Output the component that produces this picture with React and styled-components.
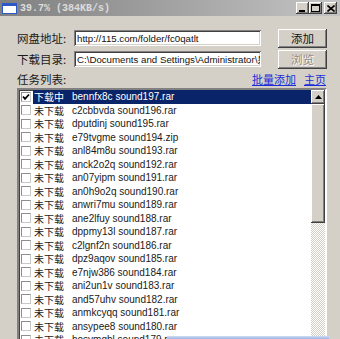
import React from "react";
import styled, { createGlobalStyle } from "styled-components";

const GlobalStyle = createGlobalStyle`
  html, body { margin: 0; padding: 0; background: #d4d0c8; }
  body {
    width: 340px; height: 339px; overflow: hidden;
    font-family: "Liberation Sans", "Noto Sans CJK SC", sans-serif;
  }
`;

const cjk = `"Noto Sans CJK SC", "Liberation Sans", sans-serif`;
const latin = `"Liberation Sans", "Noto Sans CJK SC", sans-serif`;

const raised = `
  background: #d4d0c8;
  box-shadow: inset -1px -1px #404040, inset 1px 1px #ffffff,
    inset -2px -2px #808080, inset 2px 2px #d4d0c8;
`;

const Window = styled.div`
  position: relative;
  width: 340px;
  height: 339px;
  overflow: hidden;
  display: flex;
  flex-direction: column;
  background: #d4d0c8;
`;

const TitleBar = styled.div`
  flex: none;
  height: 16px;
  display: flex;
  align-items: center;
  padding: 0 3px 0 2px;
  background: linear-gradient(to right, #808080, #c4c4c4);
`;

const TitleIcon = styled.div`
  width: 15px;
  height: 11px;
  box-sizing: border-box;
  margin-right: 3px;
  background: #ffffff;
  border: 1px solid #2c58c8;
  border-top-width: 3px;
`;

const TitleText = styled.span`
  font-family: "Liberation Mono", monospace;
  font-weight: bold;
  font-size: 10px;
  color: #dcdcdc;
  white-space: pre;
`;

const CaptionGroup = styled.div`
  margin-left: auto;
  display: flex;
  align-items: center;
`;

const CaptionButton = styled.div`
  width: 13px;
  height: 12px;
  margin-left: ${(p) => p.$gap || 0}px;
  display: flex;
  align-items: center;
  justify-content: center;
  ${raised}
`;

const Body = styled.div`
  flex: 1;
  display: flex;
  flex-direction: column;
  padding: 12px 13px 0 17px;
`;

const FormRow = styled.div`
  height: 20px;
  display: flex;
  align-items: center;
  margin-bottom: 1px;
`;

const Label = styled.span`
  width: 57px;
  font-family: ${cjk};
  font-size: 11.5px;
  color: #1a1a1a;
  white-space: nowrap;
`;

const TextBox = styled.input`
  width: 187px;
  height: 16px;
  box-sizing: border-box;
  margin: 0;
  padding: 0 1px 0 3px;
  border: none;
  outline: none;
  background: #ffffff;
  box-shadow: inset 1px 1px #808080, inset -1px -1px #ffffff,
    inset 2px 2px #404040, inset -2px -2px #d4d0c8;
  font-family: ${latin};
  font-size: 9.7px;
  color: #111;
`;

const Button = styled.button`
  margin: 0 0 0 auto;
  width: 49px;
  height: 19px;
  border: none;
  padding: 0;
  font-family: ${cjk};
  font-size: 11.5px;
  color: ${(p) => (p.disabled ? "#8c8c8c" : "#111")};
  text-shadow: ${(p) => (p.disabled ? "1px 1px #ffffff" : "none")};
  ${raised}
`;

const ListHeader = styled.div`
  height: 18px;
  display: flex;
  align-items: center;
  justify-content: space-between;
`;

const Links = styled.div`
  display: flex;
  gap: 8px;
  margin-right: 1px;
`;

const Link = styled.a`
  font-family: ${cjk};
  font-size: 11px;
  color: #1c2ad8;
  text-decoration: underline;
  cursor: pointer;
`;

const ListBox = styled.div`
  width: 310px;
  height: 264px;
  flex: none;
  box-sizing: border-box;
  display: flex;
  background: #ffffff;
  border-style: solid;
  border-width: 2px;
  border-color: #808080 #ffffff #ffffff #808080;
  box-shadow: inset 1px 1px #404040;
`;

const Rows = styled.div`
  flex: 1;
  overflow: hidden;
  padding-left: 2px;
`;

const Row = styled.div`
  height: 13.5px;
  display: flex;
  align-items: center;
`;

const Check = styled.div`
  width: 10px;
  height: 10px;
  box-sizing: border-box;
  flex: none;
  margin-right: 2px;
  background: #ffffff;
  border: 1px solid #8e8e8e;
  border-right-color: #c8c8c8;
  border-bottom-color: #c8c8c8;
  display: flex;
  align-items: center;
  justify-content: center;
`;

const Item = styled.div`
  flex: 1;
  height: 100%;
  display: flex;
  align-items: center;
  padding-left: 1px;
  background: ${(p) => (p.$selected ? "#0a246a" : "transparent")};
  color: ${(p) => (p.$selected ? "#ffffff" : "#1a1a1a")};
`;

const Status = styled.span`
  width: 38px;
  flex: none;
  font-family: ${cjk};
  font-size: 10px;
  line-height: 13px;
`;

const FileName = styled.span`
  font-family: ${latin};
  font-size: 10px;
  white-space: pre;
  line-height: 13px;
`;

const ScrollBar = styled.div`
  width: 14px;
  flex: none;
  display: flex;
  flex-direction: column;
`;

const ScrollButton = styled.div`
  height: 14px;
  flex: none;
  display: flex;
  align-items: center;
  justify-content: center;
  ${raised}
`;

const Thumb = styled.div`
  height: 119px;
  flex: none;
  ${raised}
`;

const Track = styled.div`
  flex: 1;
  background: conic-gradient(#d4d0c8 25%, #ffffff 0 50%, #d4d0c8 0 75%, #ffffff 0);
  background-size: 2px 2px;
`;

const Overlay = styled.div`
  position: absolute;
  left: 167px;
  bottom: 0;
  width: 162px;
  height: 3px;
  background: linear-gradient(#d0dcf4, #9cb4e4);
`;

const rows = [
  ["bennfx8c", "sound197.rar"],
  ["c2cbbvda", "sound196.rar"],
  ["dputdinj", "sound195.rar"],
  ["e79tvgme", "sound194.zip"],
  ["anl84m8u", "sound193.rar"],
  ["anck2o2q", "sound192.rar"],
  ["an07yipm", "sound191.rar"],
  ["an0h9o2q", "sound190.rar"],
  ["anwri7mu", "sound189.rar"],
  ["ane2lfuy", "sound188.rar"],
  ["dppmy13l", "sound187.rar"],
  ["c2lgnf2n", "sound186.rar"],
  ["dpz9aqov", "sound185.rar"],
  ["e7njw386", "sound184.rar"],
  ["ani2un1v", "sound183.rar"],
  ["and57uhv", "sound182.rar"],
  ["anmkcyqq", "sound181.rar"],
  ["ansypee8", "sound180.rar"],
  ["hosvmqhl", "sound179.rar"],
];

export default function App() {
  return (
    <>
      <GlobalStyle />
      <Window>
        <TitleBar>
          <TitleIcon />
          <TitleText>39.7% (384KB/s)</TitleText>
          <CaptionGroup>
            <CaptionButton>
              <svg width="7" height="8" viewBox="0 0 7 8"><rect x="0" y="6" width="6" height="2" fill="#000" /></svg>
            </CaptionButton>
            <CaptionButton>
              <svg width="9" height="8" viewBox="0 0 9 8"><rect x="0.5" y="0.5" width="8" height="7" fill="none" stroke="#000" /><rect x="0" y="0" width="9" height="2" fill="#000" /></svg>
            </CaptionButton>
            <CaptionButton $gap={2}>
              <svg width="8" height="7" viewBox="0 0 8 7"><path d="M0.5 0.5 L7.5 6.5 M7.5 0.5 L0.5 6.5" stroke="#000" strokeWidth="1.6" /></svg>
            </CaptionButton>
          </CaptionGroup>
        </TitleBar>
        <Body>
          <FormRow>
            <Label>网盘地址:</Label>
            <TextBox readOnly value="http://115.com/folder/fc0qatlt" />
            <Button>添加</Button>
          </FormRow>
          <FormRow>
            <Label>下载目录:</Label>
            <TextBox readOnly value="C:\Documents and Settings\Administrator\桌面" />
            <Button disabled>浏览</Button>
          </FormRow>
          <ListHeader>
            <Label>任务列表:</Label>
            <Links>
              <Link>批量添加</Link>
              <Link>主页</Link>
            </Links>
          </ListHeader>
          <ListBox>
            <Rows>
              {rows.map(([name, file], i) => (
                <Row key={file}>
                  <Check>
                    {i === 0 && (
                      <svg width="8" height="8" viewBox="0 0 8 8"><path d="M1 3.5 L3 5.8 L7 1.5" fill="none" stroke="#000" strokeWidth="1.8" /></svg>
                    )}
                  </Check>
                  <Item $selected={i === 0}>
                    <Status>{i === 0 ? "下载中" : "未下载"}</Status>
                    <FileName>{name} {file}</FileName>
                  </Item>
                </Row>
              ))}
            </Rows>
            <ScrollBar>
              <ScrollButton>
                <svg width="7" height="4" viewBox="0 0 7 4"><path d="M3.5 0 L7 4 L0 4 Z" fill="#000" /></svg>
              </ScrollButton>
              <Thumb />
              <Track />
              <ScrollButton>
                <svg width="7" height="4" viewBox="0 0 7 4"><path d="M0 0 L7 0 L3.5 4 Z" fill="#000" /></svg>
              </ScrollButton>
            </ScrollBar>
          </ListBox>
        </Body>
        <Overlay />
      </Window>
    </>
  );
}
